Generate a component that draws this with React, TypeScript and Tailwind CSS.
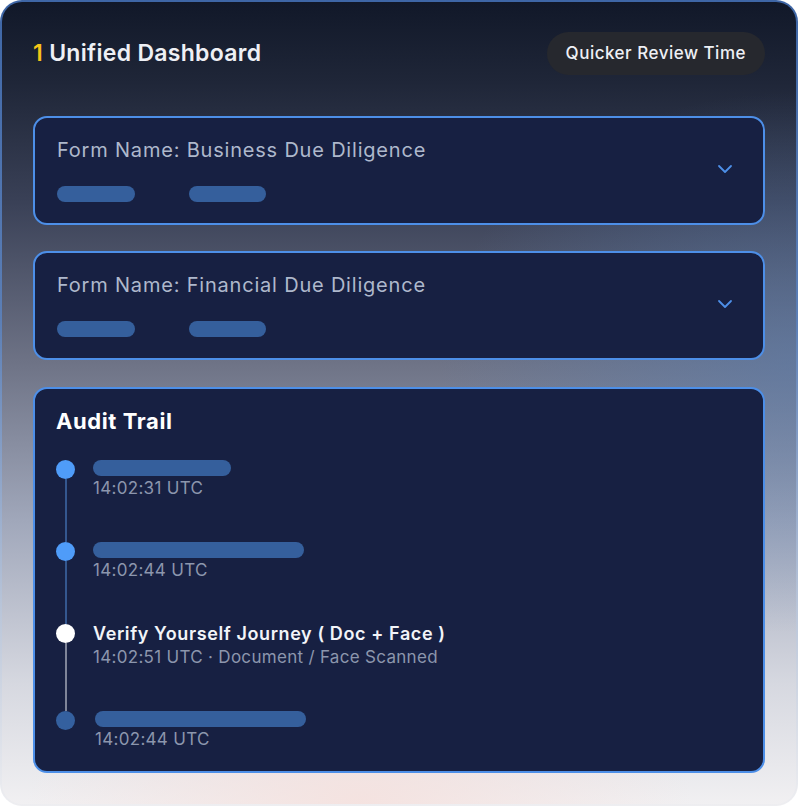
import React from 'react';

const font = { fontFamily: 'Inter, "Noto Sans", sans-serif' };

function Chevron() {
  return (
    <svg width="16" height="10" viewBox="0 0 16 10" fill="none" className="shrink-0">
      <path d="M2 2l6 6 6-6" stroke="#4d8fe8" strokeWidth="1.8" strokeLinecap="round" strokeLinejoin="round" />
    </svg>
  );
}

function FormCard({ name }: { name: string }) {
  return (
    <div className="flex items-center justify-between rounded-[14px] border-2 border-[#4d8fe8] bg-[#172042] pl-[22px] pr-[30px] pt-[17px] pb-[21px]">
      <div className="flex flex-col">
        <div className="text-[20px] leading-[30px] tracking-[0.8px] text-[#aeb8cc]">{name}</div>
        <div className="mt-[21px] flex gap-[54px]">
          <div className="h-4 w-[78px] rounded-full bg-[#355f9c]" />
          <div className="h-4 w-[77px] rounded-full bg-[#355f9c]" />
        </div>
      </div>
      <Chevron />
    </div>
  );
}

type Item = {
  dot: string;
  line?: string;
  bar?: number;
  title?: string;
  time: string;
  h: string;
  shift?: boolean;
};

const items: Item[] = [
  { dot: 'bg-[#4f9cf9]', line: 'bg-[#34578f]', bar: 138, time: '14:02:31 UTC', h: 'h-[82px]' },
  { dot: 'bg-[#4f9cf9]', line: 'bg-[#34578f]', bar: 211, time: '14:02:44 UTC', h: 'h-[82px]' },
  {
    dot: 'bg-white',
    line: 'bg-[#7f8599]',
    title: 'Verify Yourself Journey ( Doc + Face )',
    time: '14:02:51 UTC · Document / Face Scanned',
    h: 'h-[87px]',
  },
  { dot: 'bg-[#34609f]', bar: 211, time: '14:02:44 UTC', h: 'h-[50px]', shift: true },
];

export default function App() {
  return (
    <div className="min-h-screen bg-white" style={font}>
      <div className="flex h-[806px] w-[798px] flex-col rounded-[22px] border-2 border-transparent px-[31px] pt-[30px] [background:radial-gradient(ellipse_60%_30%_at_45%_100%,rgba(245,225,222,0.9),transparent_70%)_padding-box,radial-gradient(ellipse_60%_45%_at_100%_45%,rgba(90,125,175,0.55),transparent_75%)_padding-box,linear-gradient(180deg,#111829_0%,#1f2638_10%,#3a4157_25%,#6e7386_45%,#a1a8bb_65%,#d6d8e0_85%,#f1f0f2_100%)_padding-box,linear-gradient(180deg,#3e66a6_0%,#5c7fb6_40%,#b8c4d8_75%,#eeeef1_100%)_border-box]">
        <div className="flex h-[43px] items-center justify-between">
          <div className="text-[23px] font-semibold tracking-[0.3px] text-[#eef0f5]">
            <span className="text-[#f5c518]">1</span> Unified Dashboard
          </div>
          <div className="flex h-[43px] items-center rounded-full bg-[#26282e] px-[19px] text-[17px] font-medium tracking-[0.5px] text-[#eef0f5]">
            Quicker Review Time
          </div>
        </div>

        <div className="mt-[41px] flex flex-col gap-[26px]">
          <FormCard name="Form Name: Business Due Diligence" />
          <FormCard name="Form Name: Financial Due Diligence" />
        </div>

        <div className="mt-[27px] h-[386px] rounded-[14px] border-2 border-[#4d8fe8] bg-[#172042] pl-[21px] pt-[18px]">
          <div className="text-[22px] font-bold leading-[28px] tracking-[0.6px] text-white">Audit Trail</div>
          <div className="mt-[25px] flex flex-col">
            {items.map((it, i) => (
              <div key={i} className={`flex ${it.h}`}>
                <div className="flex w-[19px] flex-col items-center">
                  <div className={`h-[19px] w-[19px] shrink-0 rounded-full ${it.dot}`} />
                  {it.line && <div className={`w-[2px] flex-1 ${it.line}`} />}
                </div>
                <div className={`flex flex-col ${it.shift ? 'pl-[20px]' : 'pl-[18px]'}`}>
                  {it.bar ? (
                    <div className="h-4 rounded-full bg-[#355f9c]" style={{ width: it.bar }} />
                  ) : (
                    <div className="-mt-[2px] text-[18px] font-semibold leading-[24px] tracking-[0.6px] text-[#f2f4f8]">{it.title}</div>
                  )}
                  <div className={`${it.bar ? 'mt-[1px]' : 'mt-0'} text-[17px] leading-[23px] tracking-[0.3px] text-[#8c96ad]`}>{it.time}</div>
                </div>
              </div>
            ))}
          </div>
        </div>
      </div>
    </div>
  );
}
